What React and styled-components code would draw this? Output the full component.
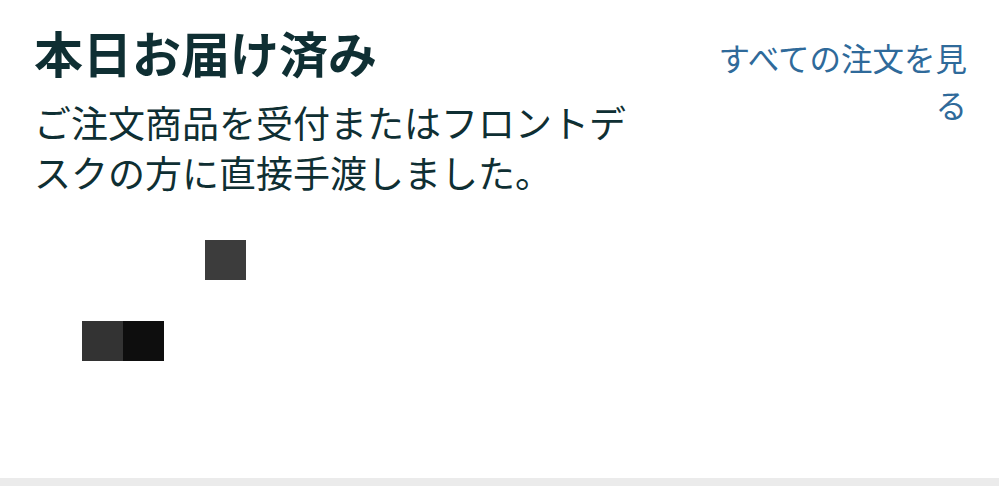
import React from 'react'
import styled, { createGlobalStyle } from 'styled-components'

const GlobalStyle = createGlobalStyle`
  html, body {
    margin: 0;
    padding: 0;
    background: #ffffff;
  }
  body {
    font-family: "Noto Sans CJK JP", "Noto Sans", sans-serif;
  }
`

const Card = styled.div`
  width: 999px;
  height: 486px;
  box-sizing: border-box;
  display: flex;
  flex-direction: column;
  background: #ffffff;
  border-bottom: 8px solid #ebebeb;
  overflow: hidden;
`

const Header = styled.div`
  display: flex;
  justify-content: space-between;
  align-items: flex-start;
  padding: 19px 32px 0 34px;
`

const TextColumn = styled.div`
  width: 610px;
  display: flex;
  flex-direction: column;
`

const Title = styled.h2`
  margin: 0;
  font-size: 49px;
  line-height: 66px;
  font-weight: 700;
  color: #0f2f33;
`

const Subtitle = styled.p`
  margin: 12px 0 0;
  font-size: 37px;
  line-height: 50px;
  font-weight: 400;
  color: #0f2f33;
`

const OrdersLink = styled.a`
  width: 262px;
  margin-top: 15px;
  text-align: right;
  font-size: 31.5px;
  line-height: 47px;
  color: #2f6a9a;
  text-decoration: none;
  cursor: pointer;
`

const Picture = styled.div`
  margin: 43px 0 0 82px;
  display: grid;
  grid-template-columns: repeat(4, 41px);
  grid-template-rows: repeat(3, 40.5px);
`

const Pixel = styled.div`
  width: 41px;
  height: 40px;
  background: ${props => props.shade};
  grid-column: ${props => props.col};
  grid-row: ${props => props.row};
`

const pixels = [
  { col: 4, row: 1, shade: '#3c3c3c' },
  { col: 1, row: 3, shade: '#333333' },
  { col: 2, row: 3, shade: '#0e0e0e' },
]

export default function App() {
  return (
    <>
      <GlobalStyle />
      <Card>
        <Header>
          <TextColumn>
            <Title>本日お届け済み</Title>
            <Subtitle>ご注文商品を受付またはフロントデスクの方に直接手渡しました。</Subtitle>
          </TextColumn>
          <OrdersLink>すべての注文を見る</OrdersLink>
        </Header>
        <Picture>
          {pixels.map((p, i) => (
            <Pixel key={i} col={p.col} row={p.row} shade={p.shade} />
          ))}
        </Picture>
      </Card>
    </>
  )
}
